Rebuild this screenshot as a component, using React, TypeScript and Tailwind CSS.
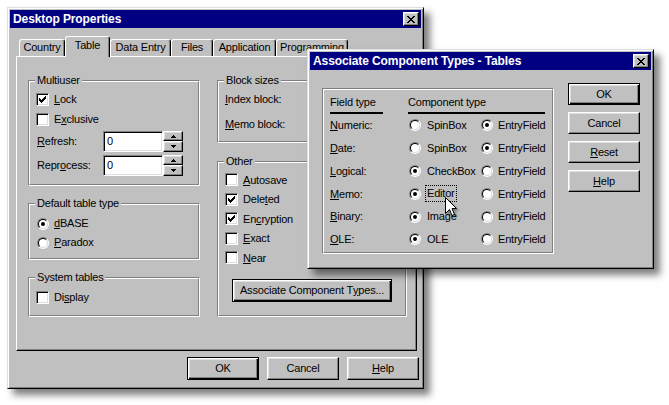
import React from 'react'

const raised =
  'bg-[#c0c0c0] border border-t-white border-l-white border-r-black border-b-black shadow-[inset_-1px_-1px_0_#808080,inset_1px_1px_0_#dfdfdf]'
const defRaised =
  'bg-[#c0c0c0] border border-black shadow-[inset_1px_1px_0_#fff,inset_-1px_-1px_0_#000,inset_-2px_-2px_0_#808080,inset_2px_2px_0_#dfdfdf]'
const sunken =
  'bg-white border border-t-[#808080] border-l-[#808080] border-r-white border-b-white shadow-[inset_1px_1px_0_#000,inset_-1px_-1px_0_#dfdfdf]'
const frame =
  'bg-[#c0c0c0] border border-t-[#dfdfdf] border-l-[#dfdfdf] border-r-black border-b-black p-[2px] shadow-[inset_1px_1px_0_#fff,inset_-1px_-1px_0_#808080,6px_6px_7px_rgba(0,0,0,0.5)]'

// "&" marks the underlined access key
function Mn({ t }: { t: string }) {
  const i = t.indexOf('&')
  if (i < 0) return <>{t}</>
  return (
    <>
      {t.slice(0, i)}
      <span className="underline underline-offset-[1px]">{t[i + 1]}</span>
      {t.slice(i + 2)}
    </>
  )
}

function Check({ on }: { on?: boolean }) {
  return (
    <span className={`w-[13px] h-[13px] shrink-0 flex items-center justify-center ${sunken}`}>
      {on && (
        <svg width="7" height="7" viewBox="0 0 7 7" shapeRendering="crispEdges">
          <path
            d="M6 0h1v1H6zM5 1h2v1H5zM0 2h1v1H0zM4 2h3v1H4zM0 3h2v1H0zM3 3h3v1H3zM0 4h5v1H0zM1 5h3v1H1zM2 6h1v1H2z"
            fill="#000"
          />
        </svg>
      )}
    </span>
  )
}

function Radio({ on }: { on?: boolean }) {
  return (
    <span className="block w-[12px] h-[12px] shrink-0 rounded-full border border-t-[#808080] border-l-[#808080] border-r-white border-b-white">
      <span className="flex w-full h-full rounded-full border border-t-black border-l-black border-r-[#dfdfdf] border-b-[#dfdfdf] bg-white items-center justify-center">
        {on && <span className="block w-[4px] h-[4px] rounded-full bg-black" />}
      </span>
    </span>
  )
}

function CloseBtn() {
  return (
    <span className={`w-[16px] h-[14px] flex items-center justify-center ${raised}`}>
      <svg width="8" height="7" viewBox="0 0 8 7" shapeRendering="crispEdges">
        <path
          d="M0 0h2v1H0zM6 0h2v1H6zM1 1h2v1H1zM5 1h2v1H5zM2 2h4v1H2zM3 3h2v1H3zM2 4h4v1H2zM1 5h2v1H1zM5 5h2v1H5zM0 6h2v1H0zM6 6h2v1H6z"
          fill="#000"
        />
      </svg>
    </span>
  )
}

function TitleBar({ title }: { title: string }) {
  return (
    <div className="h-[18px] bg-[#000080] flex items-center justify-between pl-[3px] pr-[2px]">
      <span className="text-white font-bold text-[12px] tracking-[-0.1px] leading-none">{title}</span>
      <CloseBtn />
    </div>
  )
}

function Group({ label, className, children }: { label?: string; className?: string; children?: React.ReactNode }) {
  return (
    <div className={`relative border border-t-[#808080] border-l-[#808080] border-r-white border-b-white ${className ?? ''}`}>
      <div className="h-full border border-t-white border-l-white border-r-[#808080] border-b-[#808080]">{children}</div>
      {label && (
        <span className="absolute left-[6px] -top-[8px] bg-[#c0c0c0] px-[2px] leading-[14px]">{label}</span>
      )}
    </div>
  )
}

function Arrow({ down }: { down?: boolean }) {
  return (
    <svg width="5" height="3" viewBox="0 0 5 3" shapeRendering="crispEdges">
      <path d={down ? 'M0 0h5v1H4v1H3v1H2V2H1V1H0z' : 'M2 0h1v1h1v1h1v1H0V2h1V1h1z'} fill="#000" />
    </svg>
  )
}

function Spin() {
  return (
    <div className="flex h-[21px]">
      <div className={`w-[60px] h-full pl-[3px] leading-[19px] ${sunken}`}>0</div>
      <div className="flex flex-col w-[20px] h-full">
        <span className={`h-[10px] flex items-center justify-center ${raised}`}>
          <Arrow />
        </span>
        <span className={`h-[11px] flex items-center justify-center ${raised}`}>
          <Arrow down />
        </span>
      </div>
    </div>
  )
}

const tabs = [
  { name: 'Country', w: 'w-[46px]' },
  { name: 'Table', w: 'w-[45px]', active: true },
  { name: 'Data Entry', w: 'w-[61px]' },
  { name: 'Files', w: 'w-[42px]' },
  { name: 'Application', w: 'w-[63px]' },
  { name: 'Programming', w: 'w-[72px]' },
]

const other = [
  { t: '&Autosave' },
  { t: 'Dele&ted', on: true },
  { t: 'En&cryption', on: true },
  { t: '&Exact' },
  { t: '&Near' },
]

const fieldRows = [
  { f: '&Numeric:', a: 'SpinBox', aOn: false },
  { f: '&Date:', a: 'SpinBox', aOn: false },
  { f: '&Logical:', a: 'CheckBox', aOn: true },
  { f: '&Memo:', a: 'Editor', aOn: true, focus: true },
  { f: '&Binary:', a: 'Image', aOn: true },
  { f: '&OLE:', a: 'OLE', aOn: true },
]

function DesktopProperties() {
  return (
    <div className={`absolute left-[7px] top-[7px] w-[417px] h-[382px] ${frame}`}>
      <TitleBar title="Desktop Properties" />
      <div className="mt-[8px] pl-[6px] pr-[4px]">
        <div className="flex items-end h-[20px] pl-[3px]">
          {tabs.map(tab => (
            <div
              key={tab.name}
              className={`${tab.w} ${
                tab.active ? 'h-[21px] -mb-px relative z-10 pb-[3px]' : 'h-[17px] pb-[1px]'
              } bg-[#c0c0c0] border-t border-l border-r border-t-white border-l-white border-r-black rounded-t-[3px] shadow-[inset_-1px_0_0_#808080] flex items-center justify-center whitespace-nowrap`}
            >
              {tab.name}
            </div>
          ))}
        </div>
        <div className="h-[295px] border border-t-white border-l-white border-r-black border-b-black shadow-[inset_-1px_-1px_0_#808080] pl-[11px] pt-[23px] flex gap-[17px]">
          <div className="w-[172px] flex flex-col">
            <Group label="Multiuser" className="h-[106px]">
              <div className="pl-[6px] pt-[7px]">
                <div className="h-[20px] flex items-center">
                  <Check on />
                  <span className="ml-[5px]"><Mn t="&Lock" /></span>
                </div>
                <div className="h-[20px] flex items-center">
                  <Check />
                  <span className="ml-[5px]"><Mn t="E&xclusive" /></span>
                </div>
                <div className="mt-[2px] h-[21px] flex items-center">
                  <span className="w-[67px] pl-[1px]"><Mn t="&Refresh:" /></span>
                  <Spin />
                </div>
                <div className="mt-[3px] h-[21px] flex items-center">
                  <span className="w-[67px] pl-[1px]"><Mn t="Repr&ocess:" /></span>
                  <Spin />
                </div>
              </div>
            </Group>
            <Group label="Default table type" className="mt-[17px] h-[57px]">
              <div className="pl-[7px] pt-[9px]">
                <div className="h-[19px] flex items-center">
                  <Radio on />
                  <span className="ml-[5px]"><Mn t="&dBASE" /></span>
                </div>
                <div className="h-[19px] flex items-center">
                  <Radio />
                  <span className="ml-[5px]"><Mn t="&Paradox" /></span>
                </div>
              </div>
            </Group>
            <Group label="System tables" className="mt-[17px] h-[40px]">
              <div className="pl-[6px] pt-[8px]">
                <div className="h-[20px] flex items-center">
                  <Check />
                  <span className="ml-[5px]"><Mn t="Di&splay" /></span>
                </div>
              </div>
            </Group>
          </div>
          <div className="w-[190px] flex flex-col">
            <Group label="Block sizes" className="h-[63px]">
              <div className="pl-[6px] pt-[7px]">
                <div className="h-[20px] flex items-center">
                  <Mn t="&Index block:" />
                </div>
                <div className="mt-[5px] h-[20px] flex items-center">
                  <Mn t="&Memo block:" />
                </div>
              </div>
            </Group>
            <Group label="Other" className="mt-[18px] h-[156px]">
              <div className="pl-[6px] pt-[7px]">
                {other.map(o => (
                  <div key={o.t} className="h-[19.5px] flex items-center">
                    <Check on={o.on} />
                    <span className="ml-[5px]"><Mn t={o.t} /></span>
                  </div>
                ))}
                <div
                  className={`ml-[7px] mt-[11px] w-[160px] h-[23px] flex items-center justify-center ${defRaised} shadow-[inset_1px_1px_0_#fff,inset_-1px_-1px_0_#000,inset_-2px_-2px_0_#808080,inset_2px_2px_0_#dfdfdf,0_0_2px_2px_rgba(240,240,140,0.9)]`}
                >
                  <Mn t="Associate Component T&ypes..." />
                </div>
              </div>
            </Group>
          </div>
        </div>
      </div>
      <div className="mt-[6px] pr-[2px] flex justify-end gap-[8px]">
        <div className={`w-[72px] h-[23px] flex items-center justify-center ${defRaised}`}>OK</div>
        <div className={`w-[72px] h-[23px] flex items-center justify-center ${raised}`}>Cancel</div>
        <div className={`w-[72px] h-[23px] flex items-center justify-center ${raised}`}>
          <Mn t="&Help" />
        </div>
      </div>
    </div>
  )
}

function AssociateTypes() {
  return (
    <div className={`absolute left-[307px] top-[49px] w-[347px] h-[220px] ${frame}`}>
      <TitleBar title="Associate Component Types - Tables" />
      <div className="flex items-start pl-[12px]">
        <Group className="mt-[18px] w-[232px] h-[166px]">
          <div className="pl-[6px] pt-[4px]">
            <div className="grid grid-cols-[78px_73px_1fr]">
              <div className="h-[16px] leading-[16px]">Field type</div>
              <div className="col-span-2 h-[16px] leading-[16px]">Component type</div>
              <div className="mt-[2px] h-[2px] w-[53px] bg-black" />
              <div className="col-span-2 mt-[2px] h-[2px] w-[137px] bg-black" />
              {fieldRows.map(r => (
                <React.Fragment key={r.f}>
                  <div className="h-[22.8px] flex items-center">
                    <Mn t={r.f} />
                  </div>
                  <div className="h-[22.8px] flex items-center pl-[1px]">
                    <Radio on={r.aOn} />
                    {r.focus ? (
                      <span className="ml-[4px] px-[1px] leading-[15px] border border-dotted border-black">{r.a}</span>
                    ) : (
                      <span className="ml-[6px]">{r.a}</span>
                    )}
                  </div>
                  <div className="h-[22.8px] flex items-center">
                    <Radio on={!r.aOn} />
                    <span className="ml-[5px]">EntryField</span>
                  </div>
                </React.Fragment>
              ))}
            </div>
          </div>
        </Group>
        <div className="ml-[14px] mt-[13px] flex flex-col gap-[7px]">
          <div className={`w-[72px] h-[22px] flex items-center justify-center ${defRaised}`}>OK</div>
          <div className={`w-[72px] h-[22px] flex items-center justify-center ${raised}`}>Cancel</div>
          <div className={`w-[72px] h-[22px] flex items-center justify-center ${raised}`}>
            <Mn t="&Reset" />
          </div>
          <div className={`w-[72px] h-[22px] flex items-center justify-center ${raised}`}>
            <Mn t="&Help" />
          </div>
        </div>
      </div>
    </div>
  )
}

export default function App() {
  return (
    <div className="relative w-[669px] h-[405px] overflow-hidden bg-white text-black text-[11px] tracking-[-0.2px] font-['Liberation_Sans',Arial,sans-serif]">
      <DesktopProperties />
      <AssociateTypes />
      {/* mouse pointer over "Editor" */}
      <svg
        className="absolute left-[445px] top-[197px] drop-shadow-[2px_2px_1px_rgba(0,0,0,0.35)]"
        width="12"
        height="19"
        viewBox="0 0 12 19"
      >
        <path d="M0.5 0.5V16.5L4.5 12.5L7 18.5L9.5 17.5L7 11.5H11.5Z" fill="#fff" stroke="#000" strokeWidth="1" />
      </svg>
    </div>
  )
}
